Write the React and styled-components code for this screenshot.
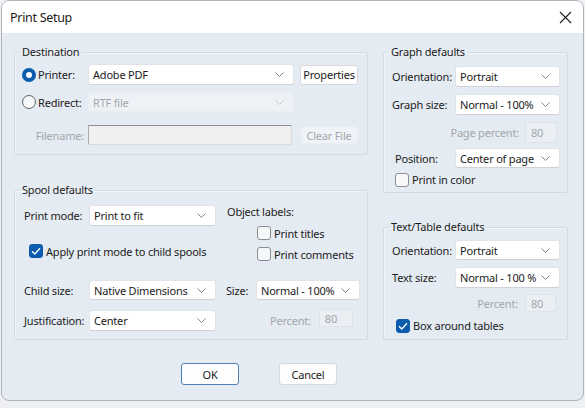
import React from 'react';
import styled, { createGlobalStyle } from 'styled-components';

const GlobalStyle = createGlobalStyle`
  body {
    margin: 0;
    background: #eef0f3;
    font-family: "Noto Sans", "Open Sans", sans-serif;
    font-size: 11px;
    letter-spacing: -0.2px;
    color: #1b1b1b;
  }
`;

const Window = styled.div`
  width: 581px;
  height: 399px;
  margin-left: 1px;
  border: 1px solid #aeb3ba;
  border-radius: 8px;
  overflow: hidden;
  background: #e5ebf2;
  display: flex;
  flex-direction: column;
`;

const TitleBar = styled.div`
  height: 32px;
  background: #fff;
  display: flex;
  align-items: center;
  justify-content: space-between;
  padding: 0 11px 0 8px;
  flex-shrink: 0;
`;

const Title = styled.span`
  font-size: 12.5px;
  letter-spacing: -0.3px;
  color: #1a1a1a;
`;

const Body = styled.div`
  display: grid;
  grid-template-columns: 354px 185px;
  column-gap: 15px;
  padding: 11px 0 0 12px;
`;

const Column = styled.div`
  display: flex;
  flex-direction: column;
`;

const Group = styled.fieldset`
  margin: ${(p) => p.$mt || 0}px 0 0 0;
  padding: 0 0 ${(p) => p.$pb || 0}px 0;
  min-width: 0;
  border: 1px solid #d2d9e2;
  border-radius: 2px;
  box-shadow: inset 1px 1px 0 #f3f6f9;
`;

const Legend = styled.legend`
  margin-left: 5px;
  padding: 0 2px;
  line-height: 16px;
`;

const Row = styled.div`
  display: flex;
  align-items: ${(p) => p.$align || 'center'};
  justify-content: ${(p) => p.$justify || 'flex-start'};
  height: ${(p) => (p.$h ? `${p.$h}px` : 'auto')};
  margin-top: ${(p) => p.$mt || 0}px;
  padding-left: ${(p) => p.$pl || 0}px;
  padding-right: ${(p) => p.$pr || 0}px;
`;

const Label = styled.span`
  flex-shrink: 0;
  width: ${(p) => (p.$w ? `${p.$w}px` : 'auto')};
  padding-left: ${(p) => p.$indent || 0}px;
  margin-left: ${(p) => p.$ml || 0}px;
  margin-right: ${(p) => p.$mr || 0}px;
  text-align: ${(p) => p.$align || 'left'};
  color: ${(p) => (p.$disabled ? '#a3a7ad' : '#1b1b1b')};
  white-space: nowrap;
  box-sizing: border-box;
`;

const Combo = styled.div`
  box-sizing: border-box;
  width: ${(p) => p.$w}px;
  height: ${(p) => p.$h || 21}px;
  flex-shrink: 0;
  display: flex;
  align-items: center;
  justify-content: space-between;
  padding: 0 9px 0 4px;
  background: ${(p) => (p.$disabled ? '#eef2f6' : '#fff')};
  color: ${(p) => (p.$disabled ? '#a3a7ad' : '#1b1b1b')};
  border: 1px solid ${(p) => (p.$disabled ? '#e8edf2' : '#e0e3e7')};
  border-bottom-color: ${(p) => (p.$disabled ? '#e8edf2' : '#cfd3d8')};
  border-radius: 3px;
  white-space: nowrap;
`;

const Field = styled.div`
  box-sizing: border-box;
  width: ${(p) => p.$w}px;
  height: ${(p) => p.$h}px;
  align-self: ${(p) => p.$self || 'auto'};
  flex-shrink: 0;
  display: flex;
  align-items: center;
  padding-left: 5px;
  background: #ebeff3;
  color: #a3a7ad;
  border: 1px solid #dde3ea;
`;

const PathField = styled(Field)`
  background: #f0f0f0;
  border-color: #8c8f93 #dcdcdc #dcdcdc #a9abae;
`;

const Button = styled.div`
  box-sizing: border-box;
  width: ${(p) => p.$w || 58}px;
  height: ${(p) => p.$h || 20}px;
  margin-left: ${(p) => p.$ml || 0}px;
  flex-shrink: 0;
  display: flex;
  align-items: center;
  justify-content: center;
  background: ${(p) => (p.$disabled ? '#eff3f7' : '#fdfdfd')};
  color: ${(p) => (p.$disabled ? '#a3a7ad' : '#1b1b1b')};
  border: 1px solid ${(p) => (p.$default ? '#4f83b8' : p.$disabled ? '#e9eef3' : '#d6d9dd')};
  border-radius: 3px;
`;

const Option = styled.label`
  display: flex;
  align-items: center;
  flex-shrink: 0;
  width: ${(p) => (p.$w ? `${p.$w}px` : 'auto')};
  height: 14px;
  margin-top: ${(p) => p.$mt || 0}px;
  margin-left: ${(p) => p.$ml || 0}px;
  white-space: nowrap;
`;

const Radio = styled.span`
  box-sizing: border-box;
  width: 14px;
  height: 14px;
  border-radius: 50%;
  margin-right: 2px;
  flex-shrink: 0;
  background: ${(p) => (p.$on ? '#fff' : '#f6f7f9')};
  border: ${(p) => (p.$on ? '4px solid #0b5cad' : '1px solid #5f6368')};
`;

const Box = styled.span`
  box-sizing: border-box;
  width: 14px;
  height: 14px;
  border-radius: 3px;
  margin-right: 3px;
  flex-shrink: 0;
  display: flex;
  align-items: center;
  justify-content: center;
  background: ${(p) => (p.$on ? '#0b5cad' : '#f6f7f9')};
  border: 1px solid ${(p) => (p.$on ? '#0b5cad' : '#8b8f94')};
`;

const Stack = styled.div`
  display: flex;
  flex-direction: column;
  width: ${(p) => (p.$w ? `${p.$w}px` : 'auto')};
  margin-left: ${(p) => p.$ml || 0}px;
  flex-shrink: 0;
`;

const Footer = styled.div`
  display: flex;
  gap: 40px;
  margin-top: 23px;
  padding-left: 179px;
`;

const Chevron = ({ disabled }) => (
  <svg width="9" height="5" viewBox="0 0 9 5">
    <path d="M0.5 0.5 L4.5 4.5 L8.5 0.5" fill="none" stroke={disabled ? '#c8cdd3' : '#80848a'} strokeWidth="1" />
  </svg>
);

const Select = ({ w, h, disabled, children }) => (
  <Combo $w={w} $h={h} $disabled={disabled}>
    <span>{children}</span>
    <Chevron disabled={disabled} />
  </Combo>
);

const Check = ({ on, children, mt, ml, w }) => (
  <Option $mt={mt} $ml={ml} $w={w}>
    <Box $on={on}>
      {on && (
        <svg width="10" height="8" viewBox="0 0 10 8">
          <path d="M1 4.2 L3.8 7 L9 1.2" fill="none" stroke="#fff" strokeWidth="1.3" />
        </svg>
      )}
    </Box>
    {children}
  </Option>
);

const CloseIcon = () => (
  <svg width="13" height="13" viewBox="0 0 13 13">
    <path d="M1 1 L12 12 M12 1 L1 12" stroke="#1f1f1f" strokeWidth="1.1" />
  </svg>
);

const App = () => (
  <>
    <GlobalStyle />
    <Window>
      <TitleBar>
        <Title>Print Setup</Title>
        <CloseIcon />
      </TitleBar>
      <Body>
        <Column>
          <Group $pb={9}>
            <Legend>Destination</Legend>
            <Row $h={21} $mt={4} $pl={7}>
              <Option $w={66}>
                <Radio $on />
                Printer:
              </Option>
              <Select w={206}>Adobe PDF</Select>
              <Button $ml={6}>Properties</Button>
            </Row>
            <Row $h={20} $mt={7} $pl={7}>
              <Option $w={66}>
                <Radio />
                Redirect:
              </Option>
              <Select w={206} h={20} disabled>RTF file</Select>
            </Row>
            <Row $h={20} $mt={13} $pl={7}>
              <Label $w={62} $mr={4} $align="right" $disabled>Filename:</Label>
              <PathField $w={204} $h={20} />
              <Button $ml={8} $h={18} $disabled>Clear File</Button>
            </Row>
          </Group>

          <Group $mt={27} $pb={7}>
            <Legend>Spool defaults</Legend>
            <Row $h={21} $mt={7} $pl={9} $align="flex-start">
              <Label $w={65} style={{ lineHeight: '21px' }}>Print mode:</Label>
              <Select w={127}>Print to fit</Select>
              <Label $ml={11} style={{ lineHeight: '14px' }}>Object labels:</Label>
            </Row>
            <Row $pl={9} $align="flex-start">
              <Stack $w={192}>
                <Check on mt={18} ml={5}>Apply print mode to child spools</Check>
              </Stack>
              <Stack $ml={41}>
                <Check>Print titles</Check>
                <Check mt={7}>Print comments</Check>
              </Stack>
            </Row>
            <Row $h={20} $mt={19} $pl={9}>
              <Label $w={65}>Child size:</Label>
              <Select w={127} h={20}>Native Dimensions</Select>
              <Label $w={30} $ml={10}>Size:</Label>
              <Select w={104} h={20}>Normal - 100%</Select>
            </Row>
            <Row $h={23} $mt={9} $pl={9}>
              <Label $w={65}>Justification:</Label>
              <Select w={127}>Center</Select>
              <Label $ml={54} $mr={8} $disabled>Percent:</Label>
              <Field $w={34} $h={18} $self="flex-start">80</Field>
            </Row>
          </Group>
        </Column>

        <Column>
          <Group $pb={6}>
            <Legend>Graph defaults</Legend>
            <Row $h={21} $mt={6} $pl={8}>
              <Label $w={63}>Orientation:</Label>
              <Select w={105}>Portrait</Select>
            </Row>
            <Row $h={21} $mt={7} $pl={8}>
              <Label $w={63}>Graph size:</Label>
              <Select w={105}>Normal - 100%</Select>
            </Row>
            <Row $h={21} $mt={7} $pr={10} $justify="flex-end">
              <Label $mr={6} $disabled>Page percent:</Label>
              <Field $w={32} $h={21}>80</Field>
            </Row>
            <Row $h={20} $mt={5} $pl={8}>
              <Label $w={63} $indent={3}>Position:</Label>
              <Select w={105} h={20}>Center of page</Select>
            </Row>
            <Row $h={13} $mt={5} $pl={11}>
              <Check>Print in color</Check>
            </Row>
          </Group>

          <Group $mt={26} $pb={7}>
            <Legend>Text/Table defaults</Legend>
            <Row $h={20} $mt={5} $pl={8}>
              <Label $w={63}>Orientation:</Label>
              <Select w={105} h={20}>Portrait</Select>
            </Row>
            <Row $h={21} $mt={7} $pl={8}>
              <Label $w={63}>Text size:</Label>
              <Select w={105}>Normal - 100 %</Select>
            </Row>
            <Row $h={18} $mt={6} $pr={11} $justify="flex-end">
              <Label $mr={7} $disabled>Percent:</Label>
              <Field $w={31} $h={18}>80</Field>
            </Row>
            <Row $h={13} $mt={7} $pl={12}>
              <Check on>Box around tables</Check>
            </Row>
          </Group>
        </Column>
      </Body>

      <Footer>
        <Button $w={58} $h={22} $default>OK</Button>
        <Button $w={58} $h={22}>Cancel</Button>
      </Footer>
    </Window>
  </>
);

export default App;
